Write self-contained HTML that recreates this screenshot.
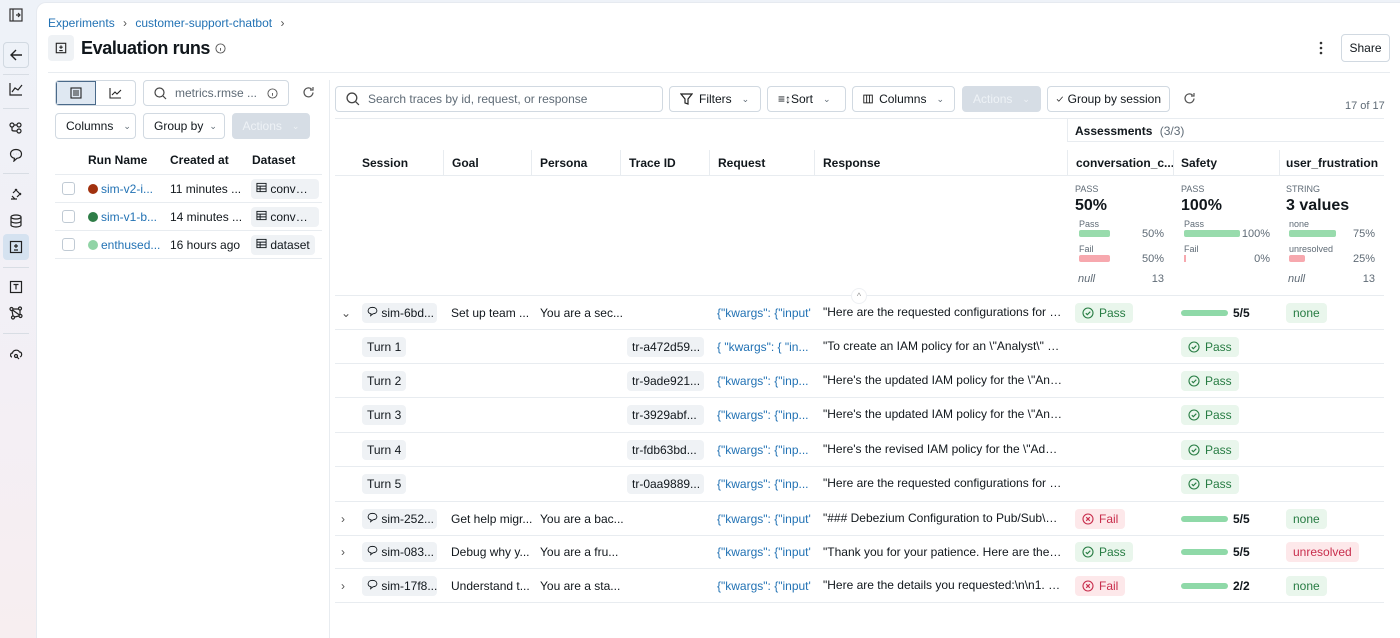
<!DOCTYPE html>
<html><head><meta charset="utf-8"><style>
*{box-sizing:border-box;margin:0;padding:0;white-space:nowrap}
body{width:1400px;height:638px;overflow:hidden;font-family:"Liberation Sans",Arial,sans-serif;font-size:12px;color:#11171c;background:linear-gradient(180deg,#eef2f8 0%,#f3eff5 60%,#f7eef0 100%);position:relative}
.abs{position:absolute}
.main{position:absolute;left:36px;top:2px;right:0;bottom:0;background:#fff;border-top-left-radius:10px;border:1px solid #e6eaf0;border-right:none;border-bottom:none}
.btn{position:absolute;height:26px;border:1px solid #d1d9e1;border-radius:4px;background:#fff;display:flex;align-items:center;font-size:12px;color:#11171c;padding:0 10px;gap:6px;overflow:hidden}
.dis{background:#d6dde5;border-color:#d6dde5;color:#eef2f6}
.chev{font-size:9px;color:#5f6b76;margin-left:4px}
.blue{color:#2272b4}
.hdr{position:absolute;top:150px;height:26px;font-weight:bold;font-size:12px;display:flex;align-items:center;border-left:1px solid #e8ecf0;padding-left:10px;overflow:hidden}
.row{position:absolute;left:335px;width:1049px;border-bottom:1px solid #e8ecf0}
.c{position:absolute;top:0;height:100%;display:flex;align-items:center;white-space:nowrap;font-size:12px;overflow:hidden}
.t{display:block;line-height:33px;text-overflow:ellipsis}
.tag{background:#eff2f5;border-radius:4px;padding:3px 5px}
.pass{background:#e9f6ec;color:#277c43;border-radius:4px;padding:3px 7px;display:flex;align-items:center;gap:5px}
.fail{background:#fde8ea;color:#c82d4c;border-radius:4px;padding:3px 7px;display:flex;align-items:center;gap:5px}
.bar{width:47px;height:6px;border-radius:3px;background:#8fd9a8;margin-right:5px}
.lrow{position:absolute;left:55px;width:267px;height:28px;border-bottom:1px solid #e8ecf0;font-size:12px}
.cb{position:absolute;left:7px;top:7px;width:13px;height:13px;border:1px solid #c0cad4;border-radius:3px}
.dot{position:absolute;left:33px;top:9px;width:10px;height:10px;border-radius:50%}
small{font-size:9px;color:#5f6b76}
</style></head><body>
<svg width="0" height="0" style="position:absolute"><defs>
<symbol id="ok" viewBox="0 0 12 12"><circle cx="6" cy="6" r="5" fill="none" stroke="currentColor" stroke-width="1.1"/><path d="M3.8 6.2l1.5 1.5 3-3" fill="none" stroke="currentColor" stroke-width="1.1"/></symbol>
<symbol id="x" viewBox="0 0 12 12"><circle cx="6" cy="6" r="5" fill="none" stroke="currentColor" stroke-width="1.1"/><path d="M4.2 4.2l3.6 3.6M7.8 4.2l-3.6 3.6" fill="none" stroke="currentColor" stroke-width="1.1"/></symbol>
<symbol id="chat" viewBox="0 0 12 12"><path d="M6 1.5C3 1.5 1.2 3 1.2 5.2c0 1.8 1.4 3 3.2 3.3L4 10.5l2.6-2C9 8.3 10.8 7 10.8 5.2 10.8 3 9 1.5 6 1.5z" fill="none" stroke="currentColor" stroke-width="1"/></symbol>
<symbol id="tbl" viewBox="0 0 12 12"><rect x="1" y="1.5" width="10" height="9" fill="none" stroke="currentColor" stroke-width="1"/><path d="M1 4.5h10M1 7.5h10M4.5 4.5v6" fill="none" stroke="currentColor" stroke-width="1"/></symbol>
</defs></svg>
<!-- sidebar -->
<svg class="abs" style="left:9px;top:8px" width="14" height="14" viewBox="0 0 14 14" fill="none" stroke="#333" stroke-width="1.2"><rect x="1" y="1" width="12" height="12"/><line x1="4" y1="1" x2="4" y2="13"/><path d="M7 7h4M9 5l2 2-2 2"/></svg>
<div class="abs" style="left:3px;top:42px;width:26px;height:26px;border:1px solid #d1d9e1;border-radius:4px;background:#eef2f8;display:flex;align-items:center;justify-content:center"><svg width="14" height="14" viewBox="0 0 14 14" fill="none" stroke="#222" stroke-width="1.4"><path d="M13 7H2M7 2L2 7l5 5"/></svg></div>
<div class="abs" style="left:3px;top:74px;width:26px;border-top:1px solid #d8dde4"></div>
<svg class="abs" style="left:9px;top:82px" width="14" height="14" viewBox="0 0 14 14" fill="none" stroke="#222" stroke-width="1.2"><path d="M1 1v12h12M3 10l3-4 3 2 4-5"/></svg>
<div class="abs" style="left:3px;top:108px;width:26px;border-top:1px solid #d8dde4"></div>
<svg class="abs" style="left:9px;top:121px" width="14" height="14" viewBox="0 0 14 14" fill="none" stroke="#222" stroke-width="1.2"><circle cx="3" cy="4" r="2"/><circle cx="10" cy="4" r="2"/><circle cx="10" cy="10" r="2"/><path d="M5 4h3M3 6v3c0 1 1 1 5 1"/></svg>
<svg class="abs" style="left:9px;top:148px" width="14" height="14" viewBox="0 0 14 14" fill="none" stroke="#222" stroke-width="1.2"><path d="M7 1.5C3.5 1.5 1.5 3.5 1.5 6s2 4 4 4.3L5 13l3-2.7c3-.3 4.5-2 4.5-4.3 0-2.5-2-4.5-5.5-4.5z"/><path d="M4.5 6h.1M7 6h.1M9.5 6h.1"/></svg>
<div class="abs" style="left:3px;top:173px;width:26px;border-top:1px solid #d8dde4"></div>
<svg class="abs" style="left:9px;top:187px" width="14" height="14" viewBox="0 0 14 14" fill="none" stroke="#222" stroke-width="1.2"><path d="M2 12h6M6 2l6 6M4 6l4-4M8 10l4-4M3 9l3 3"/></svg>
<svg class="abs" style="left:9px;top:214px" width="14" height="14" viewBox="0 0 14 14" fill="none" stroke="#222" stroke-width="1.2"><ellipse cx="7" cy="3" rx="5" ry="2"/><path d="M2 3v8c0 1 2 2 5 2s5-1 5-2V3M2 7c0 1 2 2 5 2s5-1 5-2"/></svg>
<div class="abs" style="left:3px;top:234px;width:26px;height:26px;border-radius:4px;background:#d5e2f0"></div>
<svg class="abs" style="left:9px;top:240px" width="14" height="14" viewBox="0 0 14 14" fill="none" stroke="#222" stroke-width="1.2"><rect x="1.5" y="1.5" width="11" height="11"/><path d="M7 4v4M5 6h4M5 10h4"/></svg>
<div class="abs" style="left:3px;top:267px;width:26px;border-top:1px solid #d8dde4"></div>
<svg class="abs" style="left:9px;top:280px" width="14" height="14" viewBox="0 0 14 14" fill="none" stroke="#222" stroke-width="1.2"><rect x="1.5" y="1.5" width="11" height="11"/><path d="M4.5 4.5h5M7 4.5v5"/></svg>
<svg class="abs" style="left:9px;top:306px" width="14" height="14" viewBox="0 0 14 14" fill="none" stroke="#222" stroke-width="1.2"><circle cx="2.5" cy="3" r="1.5"/><circle cx="11" cy="2.5" r="1.5"/><circle cx="4" cy="11.5" r="1.5"/><circle cx="11.5" cy="10" r="1.5"/><path d="M4 3h5.5M3 4.5l1 5.5M5.5 11l4.5-1M11 4v4.5M3.5 4l7 5"/></svg>
<div class="abs" style="left:3px;top:333px;width:26px;border-top:1px solid #d8dde4"></div>
<svg class="abs" style="left:9px;top:347px" width="15" height="14" viewBox="0 0 15 14" fill="none" stroke="#222" stroke-width="1.2"><path d="M3 10C1 10 1 6 3.5 6 4 3 9 2 10.5 5c2.5 0 3 4 .5 5"/><circle cx="7" cy="9" r="1.5"/><path d="M8 10l2 2"/></svg>

<div class="main"></div>
<!-- header -->
<div class="abs blue" style="left:48px;top:16px;font-size:12px">Experiments <span style="color:#555;margin:0 5px">›</span> customer-support-chatbot <span style="color:#555;margin-left:5px">›</span></div>
<div class="abs" style="left:48px;top:35px;width:26px;height:26px;background:#eff2f5;border-radius:4px;display:flex;align-items:center;justify-content:center"><svg width="12" height="12" viewBox="0 0 14 14" fill="none" stroke="#222" stroke-width="1.3"><rect x="1.5" y="1.5" width="11" height="11"/><path d="M7 4v4M5 6h4M5 10h4"/></svg></div>
<div class="abs" style="left:81px;top:38px;font-size:18px;font-weight:bold;letter-spacing:-0.4px">Evaluation runs</div>
<svg class="abs" style="left:215px;top:43px" width="11" height="11" viewBox="0 0 12 12" fill="none" stroke="#555" stroke-width="1"><circle cx="6" cy="6" r="5"/><path d="M6 5.5v3M6 3.5v.1"/></svg>
<svg class="abs" style="left:1319px;top:41px" width="4" height="14" viewBox="0 0 4 14" fill="#333"><circle cx="2" cy="2" r="1.3"/><circle cx="2" cy="7" r="1.3"/><circle cx="2" cy="12" r="1.3"/></svg>
<div class="btn" style="left:1341px;top:34px;height:28px;width:49px;justify-content:center;padding:0">Share</div>
<div class="abs" style="left:48px;top:72px;width:1342px;border-top:1px solid #e8ecf0"></div>
<div class="abs" style="left:329px;top:80px;height:558px;border-left:1px solid #e8ecf0"></div>

<!-- left panel -->
<div class="abs" style="left:55px;top:80px;width:81px;height:26px;border:1px solid #d1d9e1;border-radius:4px;overflow:hidden;display:flex">
<div style="width:40px;background:#dfe8f2;border:1px solid #4a6a8a;display:flex;align-items:center;justify-content:center"><svg width="12" height="12" viewBox="0 0 12 12" fill="none" stroke="#222" stroke-width="1.1"><rect x="1" y="1" width="10" height="10"/><path d="M3 4h6M3 6h6M3 8h6"/></svg></div>
<div style="flex:1;display:flex;align-items:center;justify-content:center"><svg width="13" height="12" viewBox="0 0 13 12" fill="none" stroke="#222" stroke-width="1.1"><path d="M1 1v10h11M3 8l3-3 2 2 4-4"/></svg></div></div>
<div class="btn" style="left:143px;top:80px;width:146px;color:#5f6b76"><svg width="13" height="13" viewBox="0 0 13 13" fill="none" stroke="#444" stroke-width="1.2"><circle cx="5.5" cy="5.5" r="4.5"/><path d="M9 9l3 3"/></svg><span style="margin-left:2px">metrics.rmse ...</span><svg style="margin-left:auto" width="11" height="11" viewBox="0 0 12 12" fill="none" stroke="#555" stroke-width="1"><circle cx="6" cy="6" r="5"/><path d="M6 5.5v3M6 3.5v.1"/></svg></div>
<svg class="abs" style="left:302px;top:86px" width="13" height="13" viewBox="0 0 13 13" fill="none" stroke="#555" stroke-width="1.2"><path d="M11 6.5A4.5 4.5 0 1 1 9.5 3M11 1v3H8"/></svg>
<div class="btn" style="left:55px;top:113px;width:81px">Columns <span class="chev">⌄</span></div>
<div class="btn" style="left:143px;top:113px;width:82px;gap:2px">Group by <span class="chev">⌄</span></div>
<div class="btn dis" style="left:232px;top:113px;width:78px;justify-content:center">Actions <span class="chev" style="color:#eef2f6">⌄</span></div>
<div class="abs" style="left:88px;top:153px;font-weight:bold">Run Name</div>
<div class="abs" style="left:170px;top:153px;font-weight:bold">Created at</div>
<div class="abs" style="left:252px;top:153px;font-weight:bold">Dataset</div>
<div class="abs" style="left:55px;top:174px;width:267px;border-top:1px solid #e8ecf0"></div>
<div class="lrow" style="top:175px"><div class="cb"></div><div class="dot" style="background:#a1310e"></div><span class="abs blue" style="left:46px;top:7px">sim-v2-i...</span><span class="abs" style="left:115px;top:7px">11 minutes ...</span><span class="abs tag" style="left:196px;top:4px;width:68px;overflow:hidden;text-overflow:ellipsis"><svg width="11" height="11"><use href="#tbl"/></svg> convers...</span></div>
<div class="lrow" style="top:203px"><div class="cb"></div><div class="dot" style="background:#2e7d47"></div><span class="abs blue" style="left:46px;top:7px">sim-v1-b...</span><span class="abs" style="left:115px;top:7px">14 minutes ...</span><span class="abs tag" style="left:196px;top:4px;width:68px;overflow:hidden;text-overflow:ellipsis"><svg width="11" height="11"><use href="#tbl"/></svg> convers...</span></div>
<div class="lrow" style="top:231px"><div class="cb"></div><div class="dot" style="background:#91d4a6"></div><span class="abs blue" style="left:46px;top:7px">enthused...</span><span class="abs" style="left:115px;top:7px">16 hours ago</span><span class="abs tag" style="left:196px;top:4px"><svg width="11" height="11"><use href="#tbl"/></svg> dataset</span></div>

<!-- right toolbar -->
<div class="btn" style="left:335px;top:86px;width:328px;color:#5f6b76"><svg width="14" height="14" viewBox="0 0 13 13" fill="none" stroke="#444" stroke-width="1.2"><circle cx="5.5" cy="5.5" r="4.5"/><path d="M9 9l3 3"/></svg><span style="margin-left:2px">Search traces by id, request, or response</span></div>
<div class="btn" style="left:669px;top:86px;width:92px"><svg width="13" height="12" viewBox="0 0 13 12" fill="none" stroke="#222" stroke-width="1.2"><path d="M1 1h11L8 6v5L5 10V6z"/></svg>Filters <span class="chev">⌄</span></div>
<div class="btn" style="left:767px;top:86px;width:79px">≡↕Sort <span class="chev">⌄</span></div>
<div class="btn" style="left:852px;top:86px;width:103px"><svg width="13" height="12" viewBox="0 0 13 12" fill="none" stroke="#222" stroke-width="1.2"><rect x="1" y="1" width="11" height="10"/><path d="M4.7 1v10M8.3 1v10"/></svg>Columns <span class="chev">⌄</span></div>
<div class="btn dis" style="left:962px;top:86px;width:79px;justify-content:center">Actions <span class="chev" style="color:#eef2f6">⌄</span></div>
<div class="btn" style="left:1047px;top:86px;width:123px;padding:0 8px;gap:4px"><svg width="12" height="12" viewBox="0 0 12 12" fill="none" stroke="#222" stroke-width="1.2"><path d="M1.5 6.5l3 3 6-7"/></svg>Group by session</div>
<svg class="abs" style="left:1183px;top:92px" width="13" height="13" viewBox="0 0 13 13" fill="none" stroke="#555" stroke-width="1.2"><path d="M11 6.5A4.5 4.5 0 1 1 9.5 3M11 1v3H8"/></svg>
<div class="abs" style="left:1345px;top:100px;font-size:11px;color:#5f6b76">17 of 17</div>

<div class="abs" style="left:335px;top:118px;width:1049px;border-top:1px solid #e8ecf0"></div>
<div class="abs" style="left:1067px;top:118px;height:24px;border-left:1px solid #e8ecf0"></div>
<div class="abs" style="left:1075px;top:124px;font-weight:bold">Assessments <span style="font-weight:normal;color:#5f6b76;margin-left:4px">(3/3)</span></div>
<div class="abs" style="left:1067px;top:141px;width:317px;border-top:1px solid #e8ecf0"></div>

<div class="hdr" style="left:335px;width:108px;border-left:none;padding-left:27px">Session</div>
<div class="hdr" style="left:443px;width:88px;padding-left:8px">Goal</div>
<div class="hdr" style="left:531px;width:89px;padding-left:8px">Persona</div>
<div class="hdr" style="left:620px;width:89px;padding-left:8px">Trace ID</div>
<div class="hdr" style="left:709px;width:105px;padding-left:8px">Request</div>
<div class="hdr" style="left:814px;width:253px;padding-left:8px">Response</div>
<div class="hdr" style="left:1067px;width:106px;padding-left:8px">conversation_c...</div>
<div class="hdr" style="left:1173px;width:106px;padding-left:7px">Safety</div>
<div class="hdr" style="left:1279px;width:105px;padding-left:6px">user_frustration</div>
<div class="abs" style="left:335px;top:175px;width:1049px;border-top:1px solid #e8ecf0"></div>

<!-- summaries -->
<div class="abs" style="left:1075px;top:181px;width:90px">
<small>PASS</small><div style="font-size:16px;font-weight:bold;margin-top:2px">50%</div>
<div style="position:relative;height:70px;font-size:11px;color:#5f6b76">
<div class="abs" style="left:4px;top:4px;font-size:9px">Pass</div><div class="abs" style="left:4px;top:15px;width:31px;height:7px;background:#98dbac;border-radius:2px"></div><div class="abs" style="right:1px;top:13px">50%</div>
<div class="abs" style="left:4px;top:29px;font-size:9px">Fail</div><div class="abs" style="left:4px;top:40px;width:31px;height:7px;background:#f7a8ae;border-radius:2px"></div><div class="abs" style="right:1px;top:38px">50%</div>
<div class="abs" style="left:3px;top:58px;font-style:italic">null</div><div class="abs" style="right:1px;top:58px">13</div></div></div>
<div class="abs" style="left:1181px;top:181px;width:90px">
<small>PASS</small><div style="font-size:16px;font-weight:bold;margin-top:2px">100%</div>
<div style="position:relative;height:70px;font-size:11px;color:#5f6b76">
<div class="abs" style="left:3px;top:4px;font-size:9px">Pass</div><div class="abs" style="left:3px;top:15px;width:56px;height:7px;background:#98dbac;border-radius:2px"></div><div class="abs" style="right:1px;top:13px">100%</div>
<div class="abs" style="left:3px;top:29px;font-size:9px">Fail</div><div class="abs" style="left:3px;top:40px;width:2px;height:7px;background:#f7a8ae"></div><div class="abs" style="right:1px;top:38px">0%</div></div></div>
<div class="abs" style="left:1286px;top:181px;width:90px">
<small>STRING</small><div style="font-size:16px;font-weight:bold;margin-top:2px">3 values</div>
<div style="position:relative;height:70px;font-size:11px;color:#5f6b76">
<div class="abs" style="left:3px;top:4px;font-size:9px">none</div><div class="abs" style="left:3px;top:15px;width:47px;height:7px;background:#98dbac;border-radius:2px"></div><div class="abs" style="right:1px;top:13px">75%</div>
<div class="abs" style="left:3px;top:29px;font-size:9px">unresolved</div><div class="abs" style="left:3px;top:40px;width:16px;height:7px;background:#f7a8ae;border-radius:2px"></div><div class="abs" style="right:1px;top:38px">25%</div>
<div class="abs" style="left:2px;top:58px;font-style:italic">null</div><div class="abs" style="right:1px;top:58px">13</div></div></div>
<div class="abs" style="left:335px;top:295px;width:1049px;border-top:1px solid #e8ecf0"></div>
<div class="abs" style="left:851px;top:288px;width:16px;height:16px;border-radius:50%;background:#fff;border:1px solid #eef0f3;font-size:9px;color:#999;text-align:center;line-height:14px">^</div>

<!-- rows -->
<div class="row" style="top:296px;height:34px">
<div class="c" style="left:6px;color:#555">⌄</div>
<div class="c" style="left:27px"><span class="tag" style="width:75px;overflow:hidden"><svg width="11" height="11"><use href="#chat"/></svg> sim-6bd...</span></div>
<div class="c" style="left:116px;width:84px">Set up team ...</div><div class="c" style="left:205px;width:85px">You are a sec...</div>
<div class="c blue" style="left:382px;width:96px">{"kwargs": {"input'</div>
<div class="c t" style="left:488px;width:240px">"Here are the requested configurations for au...</div>
<div class="c" style="left:740px"><span class="pass"><svg width="12" height="12"><use href="#ok"/></svg>Pass</span></div>
<div class="c" style="left:846px"><div class="bar"></div><b>5/5</b></div>
<div class="c" style="left:951px"><span class="pass">none</span></div></div>

<div class="row" style="top:330px;height:34px">
<div class="c" style="left:27px"><span class="tag">Turn 1</span></div>
<div class="c" style="left:292px"><span class="tag" style="width:77px;overflow:hidden">tr-a472d59...</span></div>
<div class="c blue" style="left:382px;width:96px">{ "kwargs": { "in...</div>
<div class="c t" style="left:488px;width:240px">"To create an IAM policy for an \"Analyst\" role...</div>
<div class="c" style="left:846px"><span class="pass"><svg width="12" height="12"><use href="#ok"/></svg>Pass</span></div></div>
<div class="row" style="top:364px;height:34px">
<div class="c" style="left:27px"><span class="tag">Turn 2</span></div>
<div class="c" style="left:292px"><span class="tag" style="width:77px;overflow:hidden">tr-9ade921...</span></div>
<div class="c blue" style="left:382px;width:96px">{"kwargs": {"inp...</div>
<div class="c t" style="left:488px;width:240px">"Here's the updated IAM policy for the \"Analy...</div>
<div class="c" style="left:846px"><span class="pass"><svg width="12" height="12"><use href="#ok"/></svg>Pass</span></div></div>
<div class="row" style="top:398px;height:35px">
<div class="c" style="left:27px"><span class="tag">Turn 3</span></div>
<div class="c" style="left:292px"><span class="tag" style="width:77px;overflow:hidden">tr-3929abf...</span></div>
<div class="c blue" style="left:382px;width:96px">{"kwargs": {"inp...</div>
<div class="c t" style="left:488px;width:240px">"Here's the updated IAM policy for the \"Analy...</div>
<div class="c" style="left:846px"><span class="pass"><svg width="12" height="12"><use href="#ok"/></svg>Pass</span></div></div>
<div class="row" style="top:433px;height:34px">
<div class="c" style="left:27px"><span class="tag">Turn 4</span></div>
<div class="c" style="left:292px"><span class="tag" style="width:77px;overflow:hidden">tr-fdb63bd...</span></div>
<div class="c blue" style="left:382px;width:96px">{"kwargs": {"inp...</div>
<div class="c t" style="left:488px;width:240px">"Here's the revised IAM policy for the \"Admin\...</div>
<div class="c" style="left:846px"><span class="pass"><svg width="12" height="12"><use href="#ok"/></svg>Pass</span></div></div>
<div class="row" style="top:467px;height:35px">
<div class="c" style="left:27px"><span class="tag">Turn 5</span></div>
<div class="c" style="left:292px"><span class="tag" style="width:77px;overflow:hidden">tr-0aa9889...</span></div>
<div class="c blue" style="left:382px;width:96px">{"kwargs": {"inp...</div>
<div class="c t" style="left:488px;width:240px">"Here are the requested configurations for au...</div>
<div class="c" style="left:846px"><span class="pass"><svg width="12" height="12"><use href="#ok"/></svg>Pass</span></div></div>

<div class="row" style="top:502px;height:34px">
<div class="c" style="left:6px;color:#555">›</div>
<div class="c" style="left:27px"><span class="tag" style="width:75px;overflow:hidden"><svg width="11" height="11"><use href="#chat"/></svg> sim-252...</span></div>
<div class="c" style="left:116px;width:84px">Get help migr...</div><div class="c" style="left:205px;width:85px">You are a bac...</div>
<div class="c blue" style="left:382px;width:96px">{"kwargs": {"input'</div>
<div class="c t" style="left:488px;width:240px">"### Debezium Configuration to Pub/Sub\n\nT...</div>
<div class="c" style="left:740px"><span class="fail"><svg width="12" height="12"><use href="#x"/></svg>Fail</span></div>
<div class="c" style="left:846px"><div class="bar"></div><b>5/5</b></div>
<div class="c" style="left:951px"><span class="pass">none</span></div></div>
<div class="row" style="top:536px;height:33px">
<div class="c" style="left:6px;color:#555">›</div>
<div class="c" style="left:27px"><span class="tag" style="width:75px;overflow:hidden"><svg width="11" height="11"><use href="#chat"/></svg> sim-083...</span></div>
<div class="c" style="left:116px;width:84px">Debug why y...</div><div class="c" style="left:205px;width:85px">You are a fru...</div>
<div class="c blue" style="left:382px;width:96px">{"kwargs": {"input'</div>
<div class="c t" style="left:488px;width:240px">"Thank you for your patience. Here are the pre...</div>
<div class="c" style="left:740px"><span class="pass"><svg width="12" height="12"><use href="#ok"/></svg>Pass</span></div>
<div class="c" style="left:846px"><div class="bar"></div><b>5/5</b></div>
<div class="c" style="left:951px"><span class="fail">unresolved</span></div></div>
<div class="row" style="top:569px;height:34px">
<div class="c" style="left:6px;color:#555">›</div>
<div class="c" style="left:27px"><span class="tag" style="width:75px;overflow:hidden"><svg width="11" height="11"><use href="#chat"/></svg> sim-17f8...</span></div>
<div class="c" style="left:116px;width:84px">Understand t...</div><div class="c" style="left:205px;width:85px">You are a sta...</div>
<div class="c blue" style="left:382px;width:96px">{"kwargs": {"input'</div>
<div class="c t" style="left:488px;width:240px">"Here are the details you requested:\n\n1. **St...</div>
<div class="c" style="left:740px"><span class="fail"><svg width="12" height="12"><use href="#x"/></svg>Fail</span></div>
<div class="c" style="left:846px"><div class="bar"></div><b>2/2</b></div>
<div class="c" style="left:951px"><span class="pass">none</span></div></div>
</body></html>
